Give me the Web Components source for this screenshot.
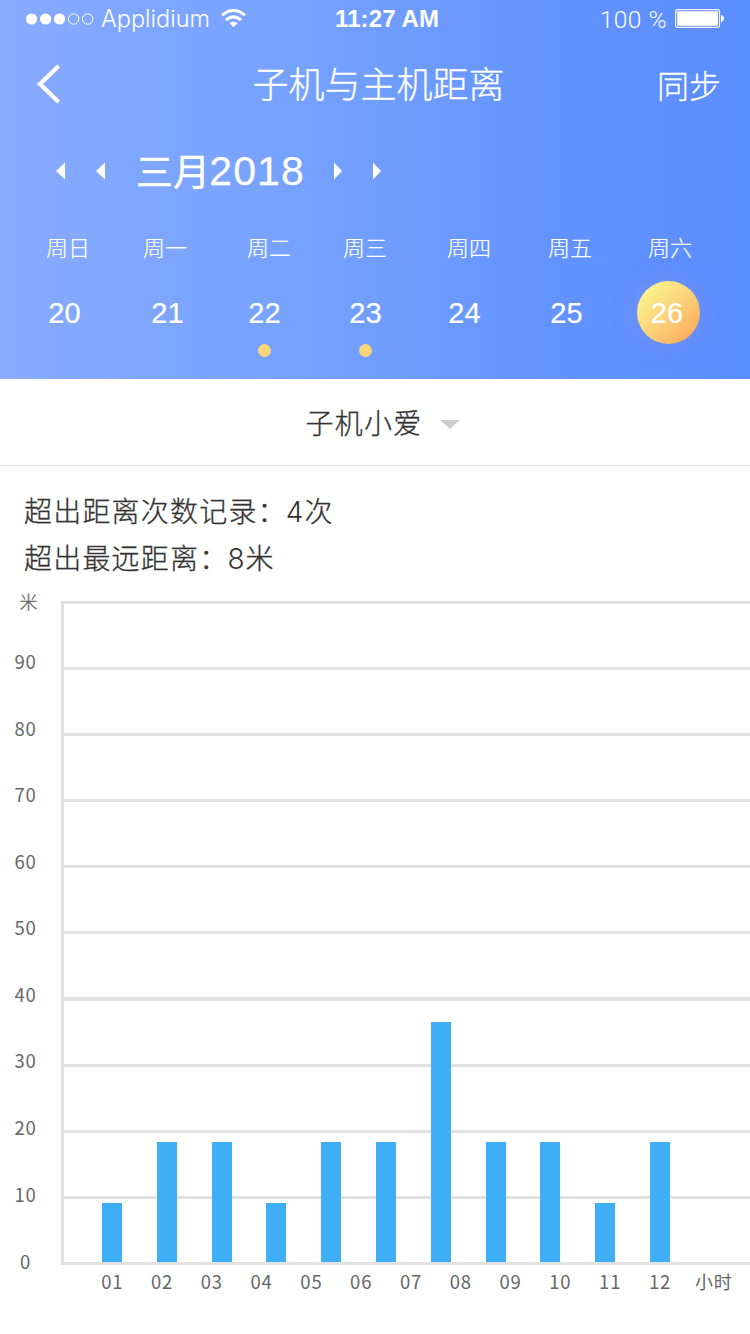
<!DOCTYPE html>
<html lang="zh-CN">
<head>
<meta charset="utf-8">
<title>子机与主机距离</title>
<style>
html,body{margin:0;padding:0;background:#fff}
body{width:750px;height:1334px;overflow:hidden;font-family:"Noto Sans CJK SC",sans-serif;color:#333}
</style>
</head>
<body>
<distance-app></distance-app>
<script>
const define = (name, html, setup) => customElements.define(name, class extends HTMLElement {
  constructor() {
    super();
    const t = document.createElement('template');
    t.innerHTML = html;
    this.attachShadow({ mode: 'open' }).appendChild(t.content.cloneNode(true));
  }
  connectedCallback() { if (setup) setup(this, this.shadowRoot); }
});

define('status-bar', `<style>
:host{display:flex;height:37px;box-sizing:border-box;padding:0 26px 0 26px;align-items:center;justify-content:space-between;font-family:Inter,sans-serif;font-size:24px;line-height:37px}
.l{display:flex;align-items:center;width:309px}
.r{display:flex;align-items:center;justify-content:flex-end;flex:1}
svg{display:block;flex:none}
.carrier{font-weight:300;font-size:23.5px;margin-left:7px;width:120px;letter-spacing:0;white-space:nowrap}
.time{font-family:"Liberation Sans",sans-serif;font-weight:700;font-size:24px;letter-spacing:.12px;white-space:nowrap}
.pct{font-family:Roboto,sans-serif;font-weight:300;font-size:24.5px;line-height:34px;padding-top:2px;margin-right:8px;letter-spacing:.5px;white-space:nowrap}
</style>
<div class="l">
<svg width="68" height="12" viewBox="0 0 68 12"><g fill="#fff"><circle cx="5.6" cy="6" r="5.6"/><circle cx="19.6" cy="6" r="5.6"/><circle cx="33.6" cy="6" r="5.6"/></g><g fill="none" stroke="#fff"><circle cx="47.6" cy="6" r="5.2"/><circle cx="61.6" cy="6" r="5.2"/></g></svg>
<span class="carrier">Applidium</span>
<svg width="25" height="19" viewBox="0 0 25 19"><g fill="none" stroke="#fff" stroke-width="3.1"><path d="M1 6.4 Q12.5 -3.4 24 6.4"/><path d="M5 11.2 Q12.5 4.6 20 11.2"/></g><path d="M8.3 14.2Q12.5 10.6 16.7 14.2L12.5 18.1Z" fill="#fff"/></svg>
</div>
<span class="time">11:27 AM</span>
<div class="r"><span class="pct">100 %</span>
<svg width="49" height="19" viewBox="0 0 49 19"><rect x=".6" y=".6" width="44" height="17.8" rx="2.4" fill="none" stroke="#fff" stroke-width="1.1"/><rect x="2.2" y="2.2" width="40.8" height="14.6" rx="1" fill="#fff"/><path d="M46 6 Q49 7 49 9.5 Q49 12 46 13Z" fill="#fff"/></svg></div>`);

define('nav-bar', `<style>
:host{display:grid;grid-template-columns:1fr 260px 1fr;height:94px;align-items:center;padding:0 29px 0 36px;-webkit-text-stroke:.3px currentColor}
svg{display:block}
.t{font-size:36px;line-height:50px;font-weight:300;text-align:center;white-space:nowrap;padding-bottom:4px}
.a{font-size:32px;line-height:50px;font-weight:300;text-align:right;padding-top:0}
</style>
<svg width="25" height="42" viewBox="0 0 25 42"><path d="M22.6 3 L4 21 L22.6 39" fill="none" stroke="#fff" stroke-width="4.2"/></svg>
<div class="t"><slot></slot></div><div class="a"><slot name="action"></slot></div>`);

define('month-picker', `<style>
:host{display:flex;align-items:center;height:80px;padding-left:56px}
svg{display:block;flex:none}
.m{display:flex;align-items:center;width:198px;padding-left:30px;white-space:nowrap;line-height:60px}
.cn{font-size:37px;width:73.3px;font-weight:400;-webkit-text-stroke:.4px currentColor;margin-top:-2px}
.y{font-family:"Liberation Sans",sans-serif;font-size:41px;letter-spacing:1.1px;-webkit-text-stroke:.25px currentColor;margin-top:-1px}
</style>
<svg width="50" height="18" viewBox="0 0 50 18"><path d="M9 0.5V17.5L0 9ZM49 0.5V17.5L40 9Z" fill="#fff"/></svg>
<div class="m"><span class="cn">三月</span><span class="y">2018</span></div>
<svg width="48" height="18" viewBox="0 0 48 18"><path d="M0 0.5V17.5L8 9ZM39 0.5V17.5L47 9Z" fill="#fff"/></svg>`);

define('day-cell', `<style>
:host{display:flex;flex-direction:column;align-items:center;width:63px;height:80px}
.n{width:63px;height:63px;line-height:65px;border-radius:50%;text-align:center;font-family:"Liberation Sans",sans-serif;font-size:29px;letter-spacing:.2px;-webkit-text-stroke:.2px currentColor;box-sizing:border-box}
:host([selected]) .n{background:linear-gradient(135deg,#fbf98e 8%,#fbd07a 52%,#ffa756 95%);box-shadow:0 0 26px rgba(165,145,205,.38);padding-right:3px}
i{display:none;width:13px;height:13px;border-radius:50%;background:#fad67a;margin-right:1px}
:host([dot]) i{display:block}
</style><div class="n"><slot></slot></div><i></i>`);

define('week-strip', `<style>
:host{display:block}
.w{display:grid;grid-template-columns:97px 104px 96px 104px 101px 100px 60px;padding-left:46px;font-size:22px;font-weight:300;line-height:32px;height:32px;-webkit-text-stroke:.2px currentColor}
.d{display:grid;grid-template-columns:103px 97px 101px 99px 102px 101.5px 63px;padding-left:33px;margin-top:19px}
day-cell[selected]{margin-left:.5px}
</style>
<div class="w"><span>周日</span><span>周一</span><span>周二</span><span>周三</span><span>周四</span><span>周五</span><span>周六</span></div>
<div class="d"><day-cell>20</day-cell><day-cell>21</day-cell><day-cell dot>22</day-cell><day-cell dot>23</day-cell><day-cell>24</day-cell><day-cell>25</day-cell><day-cell selected>26</day-cell></div>`);

define('device-select', `<style>
:host{display:flex;align-items:center;justify-content:center;height:86px;border-bottom:1px solid #e2e2e2;padding-left:16px;font-size:28px;font-weight:300;letter-spacing:1.2px;line-height:40px;-webkit-text-stroke:.3px currentColor}
svg{margin-left:18px;margin-top:5px}
</style><span><slot></slot></span><svg width="20" height="9" viewBox="0 0 20 9"><path d="M0 0H20L10 9Z" fill="#ccc"/></svg>`);

define('stat-line', `<style>
:host{display:block;height:47px;line-height:47px;font-size:28px;font-weight:300;letter-spacing:1.2px;white-space:nowrap;-webkit-text-stroke:.3px currentColor}
b{font:300 28px/40px Inter,sans-serif;letter-spacing:0;margin-left:-1px;margin-right:1px;-webkit-text-stroke:0}
</style><slot name="label"></slot><b><slot name="value"></slot></b><slot></slot>`);

define('bar-chart', `<style>
:host{display:grid;grid-template-columns:61px 689px;grid-template-rows:677px 30px;font-size:18.5px;letter-spacing:.8px;color:#666;line-height:28px}
.y{display:flex;flex-direction:column;width:22px;padding-left:14.5px;margin-top:-1px}
.y span{height:28px;flex:none;text-align:center;margin-bottom:38.5px;white-space:nowrap}
.y span:first-child{margin-bottom:32.2px;font-size:18px;padding-left:5px;font-weight:300;-webkit-text-stroke:.3px currentColor}
.y span:nth-child(9){margin-bottom:39.4px}
.plot{display:grid;height:664px;margin-top:13px}
.plot>*{grid-area:1/1}
.grid{display:grid;grid-template-rows:66px 66px 66px 66px 66px 66px 67px 66px 66px 66px 3px;border-left:3px solid #e1e1e1}
.grid i{height:3px;background:#e1e1e1}
.grid i:nth-child(7){height:4px}
.bars{display:flex;align-items:flex-end;padding:0 0 3px 41px}
.bars i{width:20px;background:#3eaef7;flex:none}
.x{grid-column:2;display:flex;padding-left:26.3px;margin-top:2px}
.x span{width:49.8px;text-align:center;flex:none;white-space:nowrap}
.x span:last-child{width:58px;font-size:18px}
</style>
<div class="y"></div><div class="plot"><div class="grid"></div><div class="bars"></div></div><div class="x"></div>`, (el, r) => {
  const add = (sel, tag, text, css) => { const e = document.createElement(tag); if (text) e.textContent = text; if (css) e.style.cssText = css; r.querySelector(sel).append(e); };
  ['米', '90', '80', '70', '60', '50', '40', '30', '20', '10', '0'].forEach(v => { add('.y', 'span', v); add('.grid', 'i'); });
  const gaps = [35, 35, 34, 35, 35, 35, 35, 34, 35, 35, 0];
  [59, 120, 120, 59, 120, 120, 240, 120, 120, 59, 120].forEach((h, i) => add('.bars', 'i', '', `height:${h}px;margin-right:${gaps[i]}px`));
  for (let i = 1; i <= 12; i++) add('.x', 'span', String(i).padStart(2, '0'));
  add('.x', 'span', '小时');
});

define('distance-app', `<style>
:host{display:block;width:750px;height:1334px;background:#fff;overflow:hidden}
header{height:379px;color:#fff;background:linear-gradient(90deg,#87abff 0%,#73a0ff 45%,#6292ff 76%,#5a8dff 100%)}
month-picker{margin-bottom:19px}
.stats{height:94px;padding:21px 0 0 24px}
bar-chart{margin-top:7px}
</style>
<header><status-bar></status-bar>
<nav-bar>子机与主机距离<span slot="action">同步</span></nav-bar>
<month-picker></month-picker><week-strip></week-strip></header>
<device-select>子机小爱</device-select>
<div class="stats"><stat-line><span slot="label">超出距离次数记录：</span><span slot="value">4</span>次</stat-line>
<stat-line><span slot="label">超出最远距离：</span><span slot="value">8</span>米</stat-line></div>
<bar-chart></bar-chart>`);
</script>
</body>
</html>
